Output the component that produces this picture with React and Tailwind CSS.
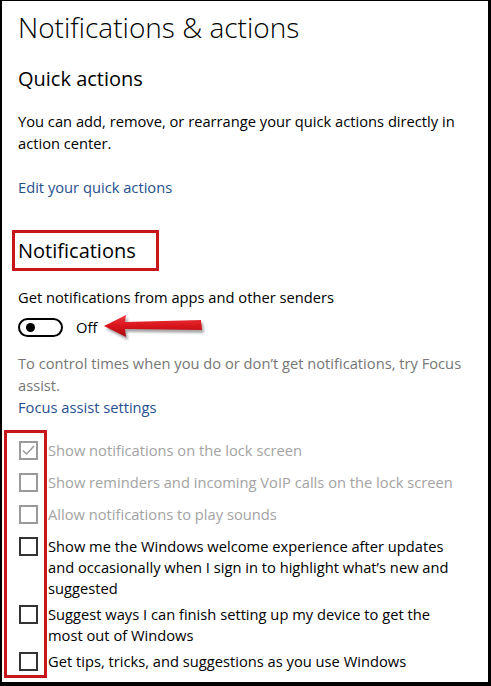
import React from "react";

const FONT = { fontFamily: '"Open Sans", "Noto Sans", sans-serif' };

function Box({ state }) {
  const gray = state !== "on-dark";
  if (state === "checked") {
    return (
      <div className="mt-[6px] w-[19px] h-[19px] shrink-0 border-2 border-[#9a9a9a] flex items-center justify-center">
        <svg width="13" height="11" viewBox="0 0 13 11">
          <polyline points="1,5.5 4.5,9 12,1" fill="none" stroke="#9a9a9a" strokeWidth="1.5" />
        </svg>
      </div>
    );
  }
  return (
    <div
      className={
        gray
          ? "mt-[6px] w-[19px] h-[19px] shrink-0 border-2 border-[#9a9a9a]"
          : "mt-[6px] w-[19px] h-[19px] shrink-0 border-2 border-[#333333]"
      }
    />
  );
}

function Row({ state, text, disabled }) {
  return (
    <div className="flex items-start min-h-[32px] pr-[6px]">
      <div className="w-[30px] shrink-0 flex pl-[1px]">
        <Box state={state} />
      </div>
      <div
        className={
          disabled
            ? "pt-[5px] text-[14.7px] leading-[21px] text-[#a3a3a3]"
            : "pt-[5px] text-[14.7px] leading-[21px] text-black"
        }
      >
        {text}
      </div>
    </div>
  );
}

export default function App() {
  return (
    <div
      className="relative w-[491px] h-[686px] bg-white border-t border-l-2 border-r-[3px] border-b-4 border-black pl-[16px] pr-[18px] overflow-hidden"
      style={FONT}
    >
      <div className="mt-[4px] h-[44px] leading-[44px] text-[28px] font-light text-black whitespace-nowrap">
        Notifications &amp; actions
      </div>
      <div className="mt-[16px] h-[28px] leading-[28px] text-[20px] text-black">Quick actions</div>
      <p className="mt-[17px] text-[14.7px] leading-[22px] text-black">
        You can add, remove, or rearrange your quick actions directly in action center.
      </p>
      <div className="mt-[22px] text-[14.7px] leading-[22px] text-[#27508f]">Edit your quick actions</div>

      <div className="mt-[32px] -ml-[6px] w-[147px] h-[41px] border-[3px] border-[#c8161d] pl-[3px] flex items-center">
        <span className="text-[20px] leading-[28px] text-black">Notifications</span>
      </div>

      <div className="mt-[15px] text-[14.7px] leading-[22px] text-black">
        Get notifications from apps and other senders
      </div>
      <div className="mt-[9px] h-[20px] flex items-center">
        <div className="w-[45px] h-[19px] rounded-full border-2 border-black flex items-center pl-[6px]">
          <div className="w-[9px] h-[9px] rounded-full bg-black" />
        </div>
        <span className="ml-[13px] text-[14.7px] leading-[20px] text-black">Off</span>
        <svg className="ml-[4px]" width="108" height="30" viewBox="0 0 108 30">
          <defs>
            <linearGradient id="rg" x1="0" y1="0" x2="0" y2="1">
              <stop offset="0" stopColor="#ee3b3f" />
              <stop offset="0.5" stopColor="#d8141b" />
              <stop offset="1" stopColor="#a90d14" />
            </linearGradient>
            <filter id="sh" x="-10%" y="-30%" width="130%" height="180%">
              <feGaussianBlur stdDeviation="1.2" />
            </filter>
          </defs>
          <polygon
            points="3,14 25,3 24,10 100,8 101,18 24,17 25,25"
            transform="translate(2,3)"
            fill="#6f6f6f"
            opacity="0.6"
            filter="url(#sh)"
          />
          <polygon points="3,14 25,3 24,10 100,8 101,18 24,17 25,25" fill="url(#rg)" />
        </svg>
      </div>

      <p className="mt-[15px] text-[14.7px] leading-[22px] text-[#767676]">
        To control times when you do or don’t get notifications, try Focus assist.
      </p>
      <div className="text-[14.7px] leading-[22px] text-[#27508f]">Focus assist settings</div>

      <div className="mt-[17px] flex flex-col">
        <Row state="checked" disabled text="Show notifications on the lock screen" />
        <Row state="off" disabled text="Show reminders and incoming VoIP calls on the lock screen" />
        <Row state="off" disabled text="Allow notifications to play sounds" />
        <Row
          state="on-dark"
          text="Show me the Windows welcome experience after updates and occasionally when I sign in to highlight what’s new and suggested"
        />
        <Row state="on-dark" text="Suggest ways I can finish setting up my device to get the most out of Windows" />
        <Row state="on-dark" text="Get tips, tricks, and suggestions as you use Windows" />
      </div>

      <div className="absolute left-[2px] top-[429px] w-[43px] h-[248px] border-[3px] border-[#c8161d] pointer-events-none" />
    </div>
  );
}
